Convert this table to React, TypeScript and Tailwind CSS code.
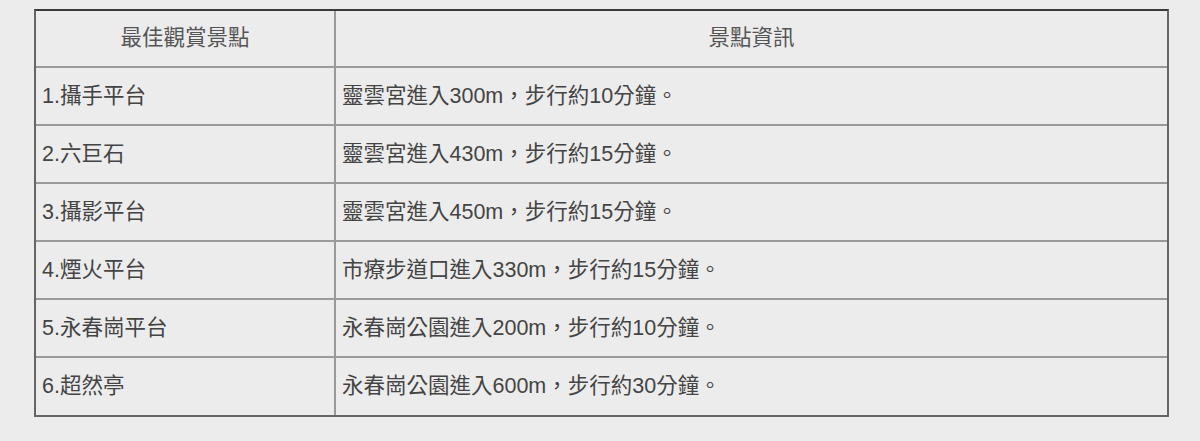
import React from 'react';

const rows = [
  { name: '1.攝手平台', info: '靈雲宮進入300m，步行約10分鐘。' },
  { name: '2.六巨石', info: '靈雲宮進入430m，步行約15分鐘。' },
  { name: '3.攝影平台', info: '靈雲宮進入450m，步行約15分鐘。' },
  { name: '4.煙火平台', info: '市療步道口進入330m，步行約15分鐘。' },
  { name: '5.永春崗平台', info: '永春崗公園進入200m，步行約10分鐘。' },
  { name: '6.超然亭', info: '永春崗公園進入600m，步行約30分鐘。' },
];

export default function App() {
  return (
    <div
      className="min-h-[441px] w-[1200px] bg-[#ececec] pl-[34px] pt-[9px]"
      style={{ fontFamily: '"Liberation Sans", "Noto Sans CJK TC", sans-serif' }}
    >
      <div className="w-[1135px] border-2 border-[#666] border-t-[#3a3a3a]">
        <table className="w-full border-collapse border-hidden text-[21.5px] text-[#444]">
          <thead>
            <tr className="h-[56px]">
              <th className="w-[299px] border-2 border-[#9a9a9a] font-normal text-[#555]">最佳觀賞景點</th>
              <th className="border-2 border-[#9a9a9a] font-normal text-[#555]">景點資訊</th>
            </tr>
          </thead>
          <tbody>
            {rows.map((r) => (
              <tr key={r.name} className="h-[58px]">
                <td className="border-2 border-[#9a9a9a] px-[6px] text-left">{r.name}</td>
                <td className="border-2 border-[#9a9a9a] px-[6px] text-left">{r.info}</td>
              </tr>
            ))}
          </tbody>
        </table>
      </div>
    </div>
  );
}
